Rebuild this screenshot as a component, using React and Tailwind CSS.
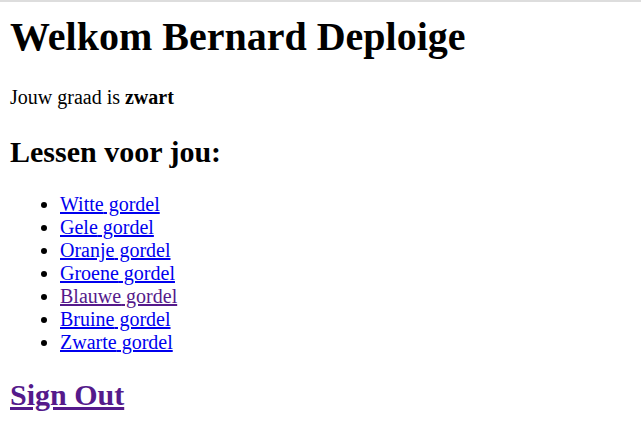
export default function App() {
  const belts = ["Witte", "Gele", "Oranje", "Groene", "Blauwe", "Bruine", "Zwarte"];
  return (
    <div className="min-h-[432px] bg-white border-t-2 border-[#dddddd] px-[10px] pt-[11px] font-['Liberation_Serif','Times_New_Roman',serif] text-black">
      <h1 className="m-0 text-[40px] font-bold leading-[normal]">Welkom Bernard Deploige</h1>
      <p className="mt-[26px] mb-0 text-[20px] leading-[normal]">
        Jouw graad is <b>zwart</b>
      </p>
      <h2 className="mt-[26px] mb-0 text-[30px] font-bold leading-[normal]">Lessen voor jou:</h2>
      <ul className="mt-[24px] mb-0 pl-[50px] list-disc text-[20px] leading-[normal]">
        {belts.map((b) => (
          <li key={b}>
            <a
              href="#"
              className={"underline " + (b === "Blauwe" ? "text-[#551a8b]" : "text-[#0000ee]")}
            >
              {b} gordel
            </a>
          </li>
        ))}
      </ul>
      <h2 className="mt-[24px] mb-0 text-[30px] font-bold leading-[normal]">
        <a href="#" className="underline text-[#551a8b]">Sign Out</a>
      </h2>
    </div>
  );
}
